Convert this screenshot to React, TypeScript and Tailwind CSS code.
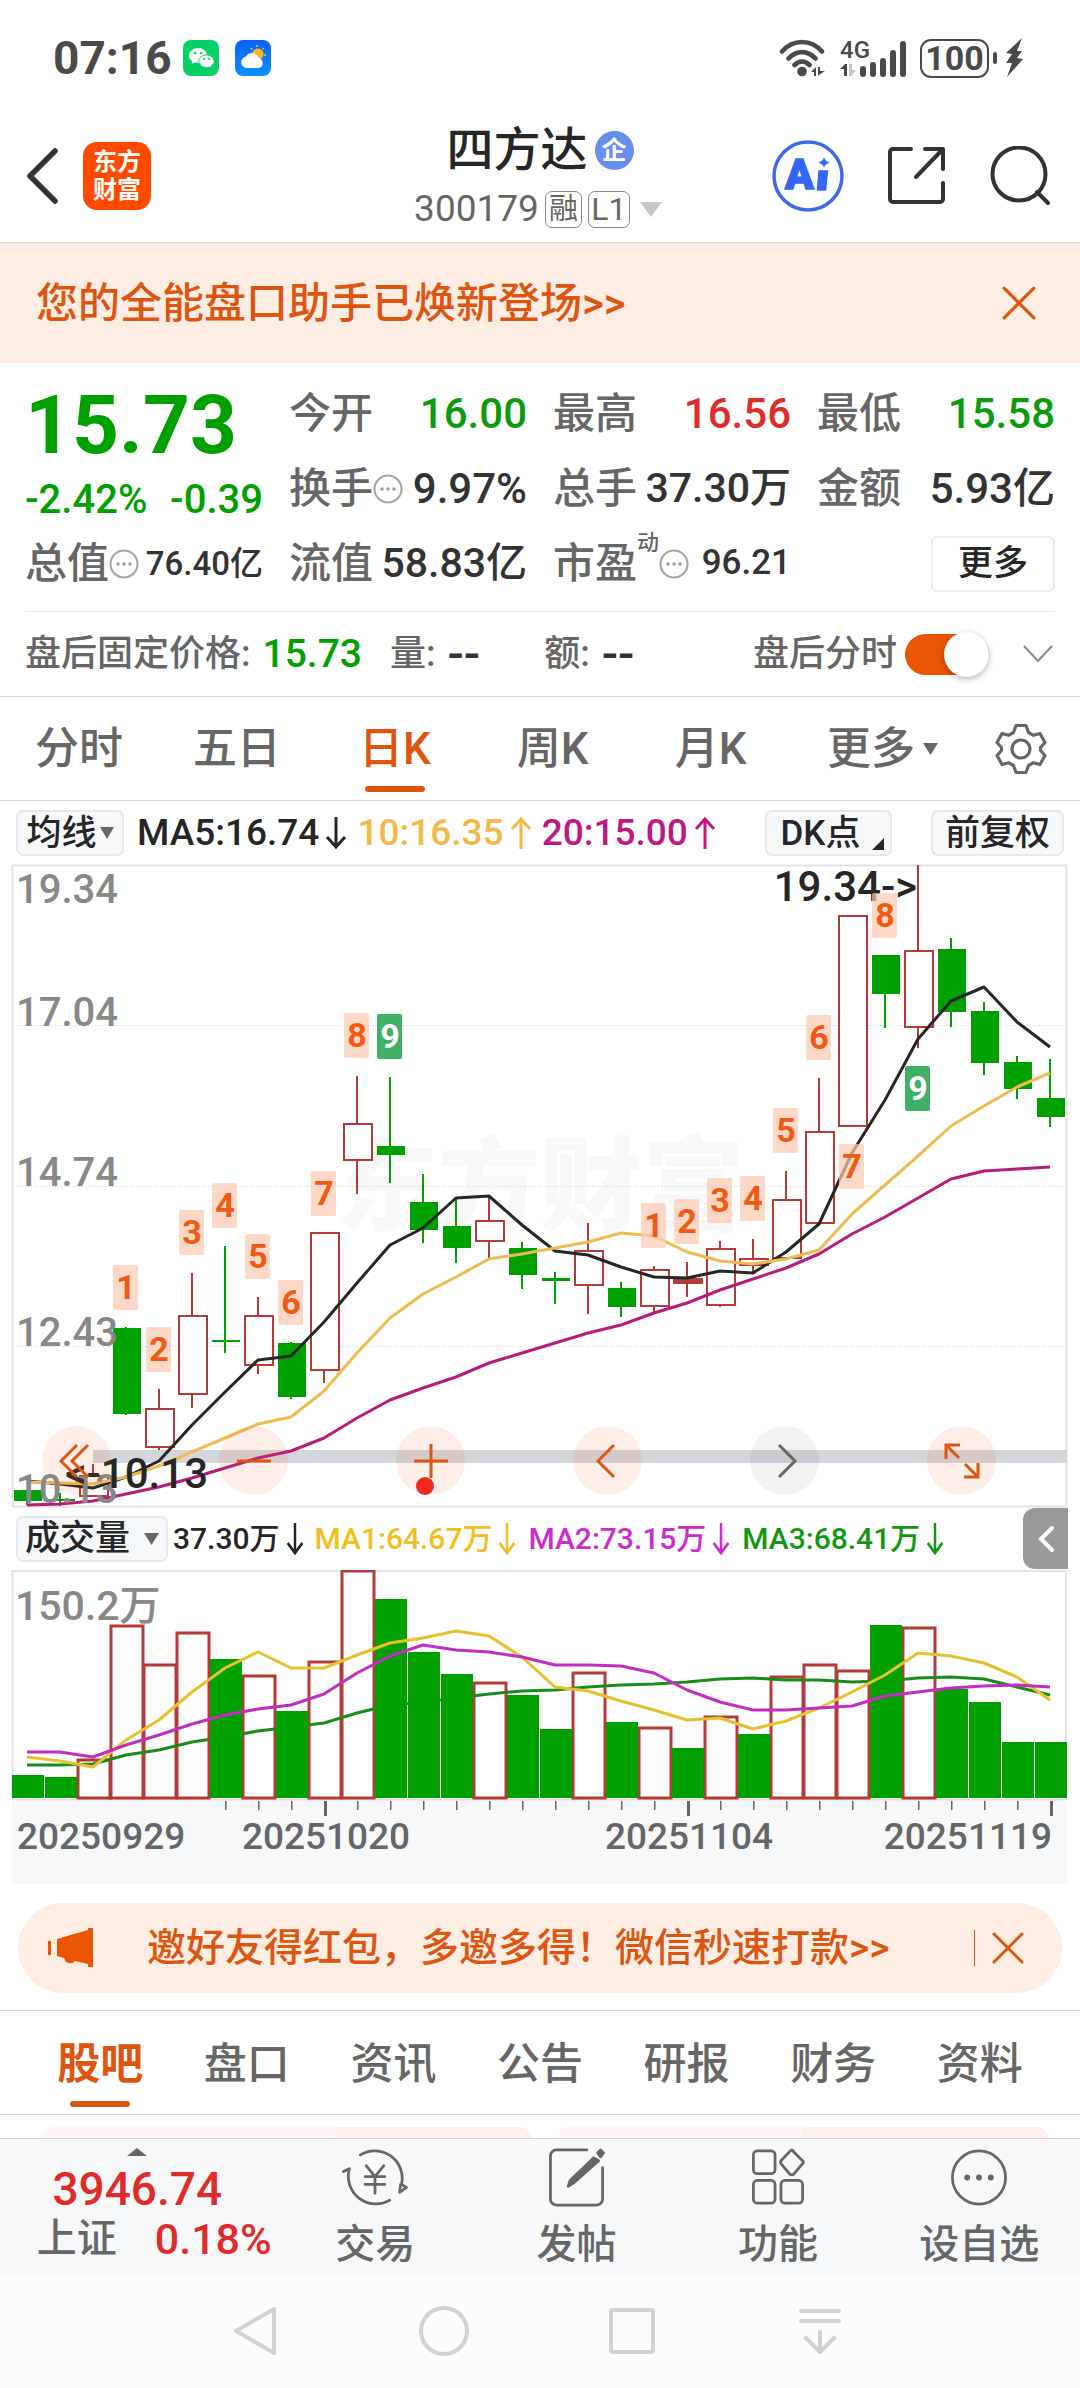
import React, { useState } from 'react';

type Candle = { up: boolean; high: number; top: number; bottom: number; low: number; solid?: boolean };

const STEP = 33;
const cx = (i: number) => 27 + STEP * i;

const c = (kind: string, high: number, top: number, bottom: number, low: number): Candle => ({
  up: kind !== 'g',
  solid: kind === 's',
  high,
  top,
  bottom,
  low,
});

const candles: Candle[] = [
  c('g', 625, 625, 636, 640),
  c('g', 628, 634, 636, 641),
  c('r', 599, 611, 631, 632),
  c('g', 462, 463, 549, 550),
  c('r', 524, 544, 582, 585),
  c('r', 408, 451, 529, 543),
  c('g', 381, 475, 477, 488),
  c('r', 432, 451, 500, 509),
  c('g', 477, 478, 532, 534),
  c('r', 368, 368, 505, 518),
  c('r', 211, 259, 295, 329),
  c('g', 212, 281, 290, 318),
  c('g', 309, 337, 365, 378),
  c('g', 334, 361, 383, 398),
  c('r', 331, 356, 376, 393),
  c('g', 377, 383, 410, 424),
  c('g', 407, 413, 416, 439),
  c('r', 358, 386, 420, 449),
  c('g', 417, 423, 442, 452),
  c('r', 401, 405, 441, 448),
  c('s', 397, 414, 418, 432),
  c('r', 376, 384, 440, 442),
  c('r', 374, 394, 400, 408),
  c('r', 306, 335, 393, 393),
  c('r', 213, 267, 358, 360),
  c('r', 51, 51, 261, 261),
  c('g', 90, 90, 129, 163),
  c('r', 0, 86, 162, 183),
  c('g', 73, 84, 147, 162),
  c('g', 137, 146, 198, 210),
  c('g', 191, 197, 224, 234),
  c('g', 194, 233, 252, 262),
];

const ma5 = [616, 619, 623, 612, 596, 560, 527, 495, 491, 457, 418, 380, 363, 333, 331, 360, 386, 390, 402, 412, 413, 406, 408, 387, 359, 288, 235, 174, 136, 122, 157, 182];
const ma10 = [617, 618, 619, 612, 601, 587, 573, 559, 552, 526, 488, 453, 429, 412, 394, 389, 383, 377, 368, 371, 387, 396, 399, 394, 385, 349, 320, 291, 261, 241, 222, 208];
const ma20 = [640, 639, 636, 629, 622, 613, 603, 593, 586, 573, 553, 535, 523, 512, 498, 488, 478, 468, 460, 448, 438, 425, 414, 403, 389, 369, 352, 333, 314, 306, 304, 302];

const badges: [number, string, number, boolean?][] = [
  [3, '1', 400], [4, '2', 462], [5, '3', 345], [6, '4', 318], [7, '5', 369], [8, '6', 415], [9, '7', 306],
  [10, '8', 148], [11, '9', 149, true], [19, '1', 338], [20, '2', 334], [21, '3', 313], [22, '4', 311],
  [23, '5', 243], [24, '6', 150], [25, '7', 279], [26, '8', 28], [27, '9', 201, true],
];

const volumes: [boolean, number][] = [
  [false, 205], [false, 207], [true, 190], [true, 56], [true, 95], [true, 63], [false, 89], [true, 106],
  [false, 141], [true, 92], [true, 1], [false, 29], [false, 82], [false, 104], [true, 113], [false, 125],
  [false, 159], [true, 103], [false, 152], [true, 158], [false, 178], [true, 147], [false, 164], [true, 107],
  [true, 95], [true, 101], [false, 55], [true, 58], [false, 119], [false, 132], [false, 172], [false, 172],
];
const v1 = [187, 191, 197, 170, 150, 122, 98, 82, 98, 98, 85, 73, 68, 61, 66, 87, 117, 121, 131, 140, 150, 148, 159, 151, 138, 122, 105, 83, 86, 93, 107, 130];
const v2 = [182, 182, 187, 175, 165, 154, 145, 139, 135, 124, 103, 86, 75, 80, 82, 87, 95, 95, 96, 103, 120, 132, 140, 140, 138, 136, 126, 122, 118, 116, 115, 117];
const v3 = [195, 195, 194, 185, 180, 172, 167, 161, 157, 153, 143, 135, 132, 128, 124, 121, 120, 117, 115, 114, 112, 109, 108, 110, 110, 112, 111, 108, 107, 109, 117, 125];

const points = (ys: number[]) => ys.map((y, i) => `${cx(i)},${y}`).join(' ');

function Line({ ys, color }: { ys: number[]; color: string }) {
  return <polyline points={points(ys)} fill="none" stroke={color} strokeWidth="3" strokeLinejoin="round" />;
}

function PriceChart() {
  return (
    <svg viewBox="0 0 1080 642" className="block w-full overflow-visible" role="img" aria-label="日K线图">
      <text x="336" y="358" fontSize="102" fontWeight="900" fill="#f8f8f8">东方财富</text>
      <rect x="12.5" y="0.5" width="1054" height="641" fill="none" stroke="#e2e3e5" strokeWidth="2" />
      {[160, 321, 481].map((y) => (
        <line key={y} x1="13" x2="1067" y1={y + 0.5} y2={y + 0.5} stroke="#d0d0d0" strokeDasharray="1 2" />
      ))}
      {candles.map((k, i) => {
        const x = cx(i);
        return k.up ? (
          <g key={i} stroke="#b53b37" strokeWidth="2" fill={k.solid ? '#b53b37' : '#fff'}>
            <path d={`M${x} ${k.high}V${k.top}M${x} ${k.bottom}V${k.low}`} />
            <rect x={x - 13} y={k.top} width="28" height={k.bottom - k.top} />
          </g>
        ) : (
          <g key={i} fill="#00a000">
            <rect x={x - 1} y={k.high} width="2" height={k.low - k.high} />
            <rect x={x - 13} y={k.top} width="28" height={k.bottom - k.top} />
          </g>
        );
      })}
      <rect x="93" y="585" width="974" height="13" fill="#d3d7dc" />
      <Line ys={ma5} color="#262626" />
      <Line ys={ma10} color="#efbb55" />
      <Line ys={ma20} color="#b71c78" />
      <g fontSize="40" fontWeight="500">
        <g fill="#888">
          <text x="16" y="38">19.34</text>
          <text x="16" y="161">17.04</text>
          <text x="16" y="321">14.74</text>
          <text x="16" y="481">12.43</text>
          <text x="16" y="638">10.13</text>
        </g>
        <text x="917" y="36" fontSize="42" fill="#262626" textAnchor="end">19.34-&gt;</text>
        <text x="208" y="623" fontSize="42" fill="#262626" textAnchor="end">&lt;-10.13</text>
      </g>
      {badges.map(([i, label, top, green]) => (
        <g key={i}>
          <rect x={cx(i) - 13} y={top} width="25" height="45" rx="2" fill={green ? '#3fb065' : '#ffc9b0'} fillOpacity={green ? 1 : 0.7} />
          <text x={cx(i)} y={top + 34} fontSize="34" fontWeight="700" textAnchor="middle" fill={green ? '#fff' : '#f05a12'}>{label}</text>
        </g>
      ))}
    </svg>
  );
}

function VolumeChart() {
  return (
    <svg viewBox="0 0 1080 315" className="block w-full" role="img" aria-label="成交量图">
      <rect x="12" y="230" width="1055" height="85" fill="#f7f8fa" />
      <path d="M12.5 229V1H1066V229" fill="none" stroke="#e2e3e5" strokeWidth="2" />
      <path d="M12 229.500H1067" stroke="#e2e3e5" strokeWidth="2" />
      <text x="15" y="50" fontSize="41" fontWeight="500" fill="#888">150.2万</text>
      <g>
        {volumes.map(([up, top], i) =>
          up ? (
            <rect key={i} x={12 + STEP * i} y={top} width="32" height={228 - top} fill="#fff" stroke="#b53b37" strokeWidth="3" />
          ) : null,
        )}
      </g>
      <Line ys={v3} color="#1b8c1b" />
      {volumes.map(([up, top], i) =>
        up ? null : <rect key={i} x={12 + STEP * i} y={top} width="32" height={228 - top} fill="#00a000" />,
      )}
      <Line ys={v1} color="#e8c12e" />
      <Line ys={v2} color="#c12fc1" />
      {volumes.map((_, i) =>
        i < 6 ? null : (
          <rect key={i} x={cx(i)} y="231" width={i % 11 === 9 ? 3 : 1.500} height={i % 11 === 9 ? 15 : 9} fill="#666" />
        ),
      )}
      <g fontSize="37" fontWeight="500" fill="#666">
        <text x="17" y="279">20250929</text>
        <text x="326" y="279" textAnchor="middle">20251020</text>
        <text x="689" y="279" textAnchor="middle">20251104</text>
        <text x="1052" y="279" textAnchor="end">20251119</text>
      </g>
    </svg>
  );
}

function Tri({ className, up }: { className: string; up?: boolean }) {
  return (
    <svg viewBox="0 0 16 12" preserveAspectRatio="none" className={className} fill="currentColor" aria-hidden="true">
      <path d={up ? 'M0 12H16L8 0Z' : 'M0 0H16L8 12Z'} />
    </svg>
  );
}

function Arrow({ up, slim }: { up?: boolean; slim?: boolean }) {
  return (
    <svg viewBox="0 0 22 34" className={slim ? 'h-[34px] w-[18px]' : 'h-[34px] w-[22px]'} preserveAspectRatio="none" fill="none" stroke="currentColor" strokeWidth="3" aria-label={up ? '上升' : '下降'}>
      <path d={up ? 'M11 33V3M2 13L11 3L20 13' : 'M11 1V31M2 21L11 31L20 21'} />
    </svg>
  );
}

function Cross({ className }: { className: string }) {
  return (
    <svg viewBox="0 0 32 32" className={className} fill="none" stroke="currentColor" strokeWidth="3" strokeLinecap="round">
      <path d="M2 2L30 30M30 2L2 30" />
    </svg>
  );
}

function Dots() {
  return (
    <svg viewBox="0 0 30 30" className="size-[30px] shrink-0" aria-label="说明" fill="#999">
      <circle cx="15" cy="15" r="13.500" fill="none" stroke="#a3a3a3" strokeWidth="2" />
      <circle cx="9" cy="15" r="1.700" />
      <circle cx="15" cy="15" r="1.700" />
      <circle cx="21" cy="15" r="1.700" />
    </svg>
  );
}

function Stat({ label, value, info, tone = 'text-[#333]', size = 'text-[42px]' }: { label: string; value: string; info?: boolean; tone?: string; size?: string }) {
  return (
    <div className="flex h-[75px] items-center whitespace-nowrap">
      <span className="text-[42px] text-[#666]">{label}</span>
      {info && <Dots />}
      <span className={`ml-auto ${size} ${tone}`}>{value}</span>
    </div>
  );
}

function StatusBar() {
  return (
    <div className="flex h-[100px] items-center pt-[16px] pr-[57px] pl-[53px] text-[#4a4a4a]">
      <span className="text-[46px] font-bold">07:16</span>
      <svg viewBox="0 0 36 36" className="ml-[11px] size-[36px]" aria-label="微信">
        <rect width="36" height="36" rx="8" fill="#07d066" />
        <path d="M15 8c-5 0-9 3.300-9 7.500 0 2.400 1.300 4.400 3.300 5.800L8.500 24l3.200-1.600c1 .3 2.100.4 3.300.4 5 0 9-3.200 9-7.300S20 8 15 8Z" fill="#fff" />
        <path d="M23.500 15c-4.300 0-7.700 2.700-7.700 6.200s3.400 6.200 7.700 6.200c.9 0 1.800-.1 2.600-.4l2.700 1.500-.7-2.500c1.900-1.200 3-2.900 3-4.800 0-3.500-3.300-6.200-7.600-6.200Z" fill="#fff" stroke="#07d066" />
        <g fill="#07d066"><circle cx="12" cy="13" r="1.300" /><circle cx="18" cy="13" r="1.300" /><circle cx="21" cy="19" r="1.100" /><circle cx="26" cy="19" r="1.100" /></g>
      </svg>
      <svg viewBox="0 0 36 36" className="ml-[16px] size-[36px]" aria-label="天气">
        <defs>
          <linearGradient id="sky" x2="0" y2="1"><stop stopColor="#0a62f5" /><stop offset="1" stopColor="#0a93ff" /></linearGradient>
        </defs>
        <rect width="36" height="36" rx="8" fill="url(#sky)" />
        <circle cx="23" cy="14" r="5.500" fill="#ffb81f" />
        <path d="M22 5v2M29 8l-1.500 1.500M31 15h-2M16 8l1 1.500" stroke="#ffc83d" strokeWidth="1.400" />
        <path d="M12 28a5.800 5.800 0 0 1-1-11.500 7 7 0 0 1 12.800 1.800A5 5 0 0 1 24 28Z" fill="#fff" />
      </svg>
      <svg viewBox="0 0 48 38" className="ml-auto h-[38px] w-[48px]" aria-label="无线网络" fill="none" stroke="currentColor" strokeWidth="4.600" strokeLinecap="round">
        <path d="M3 12.500C14-.2 32-.2 43 12.500M9.500 19.500c8-8.500 19-8.500 27 0M15.500 26c4.500-4.500 10.500-4.500 15 0" />
        <circle cx="23" cy="32.500" r="4.800" fill="currentColor" stroke="none" />
        <path d="M32 33l5-5v9h-2v-4ZM39 28v9l1.500-1.500L46 32h-5v-4Z" fill="currentColor" stroke="none" />
      </svg>
      <svg viewBox="0 0 68 38" className="ml-[13px] h-[38px] w-[68px] overflow-visible" aria-label="4G 信号" fill="currentColor">
        <text x="0" y="19" fontSize="24" fontWeight="500">4G</text>
        <path d="M0 30l5-5h2v12H4v-7Z" />
        <path d="M9 25h3v6h4l-5 6H9Z" fill="#c4c4c4" />
        <rect x="20" y="27" width="6" height="11" rx="3" />
        <rect x="30" y="23" width="6" height="15" rx="3" />
        <rect x="40" y="19" width="6" height="19" rx="3" />
        <rect x="50" y="11" width="6" height="27" rx="3" />
        <rect x="60" y="2" width="6" height="36" rx="3" />
      </svg>
      <span className="ml-[12px] flex h-[39px] w-[69px] items-center justify-center rounded-[11px] border-[2px] border-[#4a4a4a] text-[34px] leading-none font-bold">100</span>
      <span className="ml-[4px] h-[12px] w-[4px] rounded-full bg-[#4a4a4a]" />
      <svg viewBox="0 0 18 40" className="ml-[8px] h-[40px] w-[18px]" fill="currentColor" aria-label="充电中">
        <path d="M17 0L1 15l6 1-6 9h6L2 39 18 21l-6-1 5-7h-5Z" />
      </svg>
    </div>
  );
}

function Header() {
  return (
    <header className="flex h-[143px] items-center border-b border-[#d6d6d6] pt-[10px] pr-[30px] pl-[26px]">
      <div className="flex flex-1 items-center">
        <button type="button" aria-label="返回">
          <svg viewBox="0 0 32 56" className="h-[56px] w-[32px]" fill="none" stroke="#333" strokeWidth="5.500" strokeLinecap="round" strokeLinejoin="round">
            <path d="M29 3L4 28L29 53" />
          </svg>
        </button>
        <button type="button" className="ml-[25px] grid size-[68px] content-center rounded-[14px] bg-[#ff4a00] text-[24px] leading-[28px] font-bold text-white">
          <span>东方</span>
          <span>财富</span>
        </button>
      </div>
      <div className="flex flex-col items-center pt-[8px]">
        <h1 className="flex h-[58px] items-center gap-[7px] pl-[4px] text-[47px] font-medium text-[#262626]">
          四方达
          <span className="flex size-[39px] items-center justify-center rounded-full bg-[#658fe8] text-[25px] leading-none font-bold text-white">企</span>
        </h1>
        <button type="button" className="flex h-[60px] items-center text-[37px] text-[#666]">
          300179
          <span className="ml-[6px] flex h-[37px] w-[37px] items-center justify-center rounded-[7px] border border-[#888] text-[29px] leading-none">融</span>
          <span className="ml-[6px] flex h-[37px] w-[42px] items-center justify-center rounded-[7px] border border-[#888] text-[32px] leading-none">L1</span>
          <Tri className="ml-[10px] h-[15px] w-[22px] text-[#c8c8c8]" />
        </button>
      </div>
      <div className="flex flex-1 items-center justify-end">
        <button type="button" aria-label="Ai">
          <svg viewBox="0 0 72 72" className="size-[72px]" fill="#3466f6">
            <circle cx="36" cy="36" r="34" fill="none" stroke="#3d6be8" strokeWidth="3.500" />
            <text x="13" y="49" fontSize="42" fontWeight="900" stroke="#3466f6" strokeWidth="1.500">A</text>
            <path d="M47 31h8.500l-2 19H45.500Z" stroke="#3466f6" strokeWidth="1.500" strokeLinejoin="round" />
            <path d="M52 17q1 4.500 6 5.500-5 1-6 5.500-1-4.500-6-5.500 5-1 6-5.500Z" />
          </svg>
        </button>
        <button type="button" aria-label="分享" className="ml-[43px]">
          <svg viewBox="0 0 60 60" className="size-[60px]" fill="none" stroke="#333" strokeWidth="4" strokeLinecap="round" strokeLinejoin="round">
            <path d="M24 3H6a3 3 0 0 0-3 3V53a3 3 0 0 0 3 3H53a3 3 0 0 0 3-3V37M38 3H56V23M55 4L29 31" />
          </svg>
        </button>
        <button type="button" aria-label="搜索" className="ml-[43px]">
          <svg viewBox="0 0 60 60" className="size-[60px]" fill="none" stroke="#333" strokeWidth="4" strokeLinecap="round">
            <circle cx="29" cy="28" r="26.500" />
            <path d="M47 46L58 57" />
          </svg>
        </button>
      </div>
    </header>
  );
}

function Quote() {
  const [after, setAfter] = useState(true);
  return (
    <section className="border-b border-[#d6d6d6] px-[25px] pt-[13px] font-medium">
      <div className="grid grid-cols-4 gap-x-[26px] border-b border-[#ececec] pb-[10px]">
        <div className="row-span-2 text-[#00a000]">
          <div className="h-[98px] text-[82px] leading-[98px] font-bold">15.73</div>
          <div className="flex h-[52px] items-center justify-between text-[40px] whitespace-nowrap">
            <span>-2.42%</span>
            <span>-0.39</span>
          </div>
        </div>
        <Stat label="今开" value="16.00" tone="text-[#0d9b0d]" />
        <Stat label="最高" value="16.56" tone="text-[#e02b2b]" />
        <Stat label="最低" value="15.58" tone="text-[#0d9b0d]" />
        <Stat label="换手" value="9.97%" info />
        <Stat label="总手" value="37.30万" size="text-[41px]" />
        <Stat label="金额" value="5.93亿" />
        <Stat label="总值" value="76.40亿" info size="text-[33px]" />
        <Stat label="流值" value="58.83亿" size="text-[41px]" />
        <div className="flex h-[75px] items-center whitespace-nowrap">
          <span className="text-[42px] text-[#666]">市盈</span>
          <sup className="top-0 self-start text-[22px] leading-[34px] text-[#666]">动</sup>
          <Dots />
          <span className="ml-auto text-[35px] text-[#333]">96.21</span>
        </div>
        <div className="flex h-[75px] items-center justify-end">
          <button type="button" className="h-[56px] w-[124px] rounded-[6px] border-[2px] border-[#ececec] text-[35px] leading-none text-[#262626]">更多</button>
        </div>
      </div>
      <div className="flex h-[84px] items-center text-[36px] whitespace-nowrap text-[#666]">
        <span>盘后固定价格:</span>
        <span className="ml-[12px] text-[39px] text-[#00a000]">15.73</span>
        <span className="ml-[28px]">量:</span>
        <span className="ml-[12px] text-[48px] leading-none text-[#333]">--</span>
        <span className="ml-[64px]">额:</span>
        <span className="ml-[12px] text-[48px] leading-none text-[#333]">--</span>
        <label htmlFor="after-hours" className="ml-auto">盘后分时</label>
        <input
          id="after-hours"
          type="checkbox"
          role="switch"
          checked={after}
          onChange={(e) => setAfter(e.target.checked)}
          className="ml-[8px] flex h-[41px] w-[84px] appearance-none items-center rounded-full bg-[#ccc] before:size-[45px] before:rounded-full before:bg-white before:shadow-[0_2px_6px_rgba(0,0,0,0.3)] checked:justify-end checked:bg-[#ea5504]"
        />
        <button type="button" aria-label="展开" className="mr-[2px] ml-[34px]">
          <svg viewBox="0 0 30 18" className="h-[18px] w-[30px]" fill="none" stroke="#888" strokeWidth="2"><path d="M1 1L15 16L29 1" /></svg>
        </button>
      </div>
    </section>
  );
}

const periods = ['分时', '五日', '日K', '周K', '月K'];

function PeriodTabs() {
  return (
    <nav className="flex h-[104px] border-b border-[#d6d6d6] text-[44px] font-medium text-[#666]">
      {periods.map((p) => (
        <button key={p} type="button" className={p === '日K' ? 'relative flex-[4] text-[#dd5611]' : 'relative flex-[4]'}>
          {p}
          {p === '日K' && <span className="absolute inset-x-0 bottom-[8px] mx-auto h-[6px] w-[60px] rounded-full bg-[#dd5611]" />}
        </button>
      ))}
      <button type="button" className="flex flex-[4] items-center justify-center gap-[8px] pl-[14px]">
        更多
        <Tri className="h-[12px] w-[15px]" />
      </button>
      <button type="button" aria-label="设置" className="flex flex-[3] items-center justify-center">
        <svg viewBox="0 0 52 52" className="size-[52px]" fill="none" stroke="#666" strokeWidth="3.200" strokeLinejoin="round">
          <path d="M21 2.500H31L33.500 9.500L38.500 12.300L45 10.500L50 19.500L45.500 24.500V27.500L50 32.500L45 41.500L38.500 39.700L33.500 42.500L31 49.500H21L18.500 42.500L13.500 39.700L7 41.500L2 32.500L6.500 27.500V24.500L2 19.500L7 10.500L13.500 12.300L18.500 9.500Z" />
          <circle cx="26" cy="26" r="9" />
        </svg>
      </button>
    </nav>
  );
}

const chip = 'flex h-[46px] items-center justify-center rounded-[7px] border-[2px] border-[#e6e8eb] bg-[#f7f8fa] text-[35px] leading-none text-[#262626]';

function Indicators() {
  return (
    <div className="flex h-[64px] items-center pr-[16px] pl-[16px] text-[37px] font-medium whitespace-nowrap">
      <button type="button" className={`${chip} w-[108px]`}>
        均线
        <Tri className="ml-[3px] h-[12px] w-[14px] text-[#666]" />
      </button>
      <span className="ml-[13px] flex items-center gap-[6px] text-[#262626]">MA5:16.74<Arrow /></span>
      <span className="ml-[10px] flex items-center gap-[6px] text-[#f3b94c]">10:16.35<Arrow up /></span>
      <span className="ml-[10px] flex items-center gap-[6px] text-[#c01880]">20:15.00<Arrow up /></span>
      <button type="button" className={`${chip} relative ml-auto w-[127px] pr-[16px]`}>
        DK点
        <svg viewBox="0 0 12 12" className="absolute right-[6px] bottom-[4px] size-[12px]" fill="#262626"><path d="M12 0V12H0Z" /></svg>
      </button>
      <button type="button" className={`${chip} ml-[39px] w-[133px]`}>前复权</button>
    </div>
  );
}

const round = 'relative flex size-[69px] items-center justify-center rounded-full';

function Controls() {
  const icon = 'size-[36px]';
  const p = { viewBox: '0 0 36 36', fill: 'none', stroke: 'currentColor', strokeWidth: 3 };
  return (
    <div className="absolute inset-x-0 bottom-[12px] flex justify-between pr-[84px] pl-[42px] text-[#dd5611]">
      <button type="button" aria-label="最早" className={`${round} bg-[#f05a14]/10`}>
        <svg {...p} className={icon}><path d="M18 2L2 18L18 34M29 2L13 18L29 34" /></svg>
      </button>
      <button type="button" aria-label="缩小" className={`${round} bg-[#f05a14]/10`}>
        <svg {...p} className={icon}><path d="M1 18H35" /></svg>
      </button>
      <button type="button" aria-label="放大" className={`${round} bg-[#f05a14]/10`}>
        <svg {...p} className={icon}><path d="M1 18H35M18 1V35" /></svg>
        <span className="absolute bottom-0 left-[20px] size-[18px] rounded-full bg-[#f22822]" />
      </button>
      <button type="button" aria-label="向前" className={`${round} bg-[#f05a14]/10`}>
        <svg {...p} className={icon}><path d="M24 2L8 18L24 34" /></svg>
      </button>
      <button type="button" aria-label="向后" className={`${round} bg-black/5 text-[#666]`}>
        <svg {...p} className={icon}><path d="M12 2L28 18L12 34" /></svg>
      </button>
      <button type="button" aria-label="全屏" className={`${round} bg-[#f05a14]/10`}>
        <svg {...p} className={icon}><path d="M2 16V2H16M2 2L15 15M34 20V34H20M34 34L21 21" /></svg>
      </button>
    </div>
  );
}

function VolumeHeader() {
  return (
    <div className="flex h-[63px] items-center pr-[12px] pl-[16px] text-[30px] font-medium whitespace-nowrap">
      <button type="button" className={`${chip} w-[152px]`}>
        成交量
        <Tri className="ml-[14px] h-[12px] w-[15px] text-[#666]" />
      </button>
      <span className="ml-[5px] flex items-center gap-[6px] text-[#262626]">37.30万<Arrow slim /></span>
      <span className="ml-[11px] flex items-center gap-[6px] text-[#f0c01e]">MA1:64.67万<Arrow slim /></span>
      <span className="ml-[12px] flex items-center gap-[6px] text-[#cc2ccc]">MA2:73.15万<Arrow slim /></span>
      <span className="ml-[12px] flex items-center gap-[6px] text-[#149614]">MA3:68.41万<Arrow slim /></span>
      <button type="button" aria-label="收起" className="ml-auto flex h-[61px] w-[45px] items-center justify-center rounded-l-[12px] bg-[#999]">
        <svg viewBox="0 0 18 28" className="h-[28px] w-[18px]" fill="none" stroke="#fff" strokeWidth="4" strokeLinecap="round"><path d="M15 3L4 14L15 25" /></svg>
      </button>
    </div>
  );
}

function Promo() {
  return (
    <div className="mx-[18px] mt-[18px] mb-[17px] flex h-[90px] items-center rounded-full bg-[#fdede3] pr-[38px] pl-[30px] text-[39px] font-medium whitespace-nowrap text-[#dd5611]">
      <svg viewBox="0 0 46 40" className="h-[40px] w-[46px] shrink-0" fill="#ea5504" aria-hidden="true">
        <path d="M0 13h3v14H0ZM9 11L40 2V0h5V39H40V36L27 33Q24 37 18 34L16 30L9 28Z" />
      </svg>
      <a href="#invite" className="ml-[53px]">邀好友得红包，多邀多得！微信秒速打款&gt;&gt;</a>
      <span className="ml-auto h-[36px] w-px bg-[#dd5611]" />
      <button type="button" aria-label="关闭" className="ml-[17px]"><Cross className="size-[32px]" /></button>
    </div>
  );
}

const sections = ['股吧', '盘口', '资讯', '公告', '研报', '财务', '资料'];

function SectionTabs() {
  return (
    <nav className="grid h-[105px] grid-cols-7 border-y border-[#d6d6d6] px-[27px] text-[43px] font-medium text-[#666]">
      {sections.map((s, i) => (
        <button key={s} type="button" className={i === 0 ? 'relative pt-[4px] font-bold text-[#dd5611]' : 'relative pt-[4px]'}>
          {s}
          {i === 0 && <span className="absolute inset-x-0 bottom-[7px] mx-auto h-[6px] w-[60px] rounded-full bg-[#dd5611]" />}
        </button>
      ))}
    </nav>
  );
}

function BottomItem({ label, children }: { label: string; children: React.ReactNode }) {
  return (
    <button type="button" className="flex flex-[201] flex-col items-center pt-[8px]">
      <svg viewBox="0 0 66 62" className="h-[62px] w-[66px]" fill="none" stroke="#666" strokeWidth="2.800" strokeLinecap="round" strokeLinejoin="round">{children}</svg>
      <span className="mt-[8px] text-[40px] leading-[58px]">{label}</span>
    </button>
  );
}

function BottomBar() {
  return (
    <footer className="flex h-[136px] border-t border-[#d0d2d4] bg-[#f7f8fa] font-medium whitespace-nowrap text-[#666]">
      <button type="button" className="flex flex-[274] flex-col items-center pt-[9px]">
        <Tri up className="h-[8px] w-[20px]" />
        <span className="mt-[8px] text-[46px] leading-[50px] text-[#e02b2b]">3946.74</span>
        <span className="ml-[34px] flex items-center gap-[38px] text-[40px] leading-[50px]">
          上证
          <span className="text-[43px] text-[#e02b2b]">0.18%</span>
        </span>
      </button>
      <BottomItem label="交易">
        <path d="M18 8A28 28 0 0 1 60 38M48 54A28 28 0 0 1 7 22M7 22L1 25M60 38L65 41L58 46L59 38" />
        <path d="M24 19L33 30L42 19M33 30V47M23 30H43M23 38H43" />
      </BottomItem>
      <BottomItem label="发帖">
        <path d="M43 3H12a6 6 0 0 0-6 6V53a6 6 0 0 0 6 6H53a6 6 0 0 0 6-6V21" />
        <path d="M50 11L55 14L29 37L24 40L26 34ZM54 6L57 3L60 6L57 10Z" fill="#666" />
      </BottomItem>
      <BottomItem label="功能">
        <rect x="8" y="4" width="22" height="23" rx="4" />
        <path d="M47 3L58 14Q59.500 15.500 58 17L49 27.500Q47 29 45 27.500L36 17Q35 15.500 36 14L45 4.500Q47 2 49 4.500Z" />
        <rect x="8" y="34" width="22" height="23" rx="4" />
        <rect x="36" y="34" width="22" height="23" rx="4" />
      </BottomItem>
      <BottomItem label="设自选">
        <circle cx="33" cy="31" r="27" />
        <g fill="#666" stroke="none"><circle cx="21" cy="31" r="3" /><circle cx="33" cy="31" r="3" /><circle cx="45" cy="31" r="3" /></g>
      </BottomItem>
    </footer>
  );
}

function SystemNav() {
  const p = { viewBox: '0 0 50 50', className: 'size-[50px]', fill: 'none', stroke: '#d2d2d2', strokeWidth: 4, strokeLinejoin: 'round' as const, strokeLinecap: 'round' as const };
  return (
    <div className="flex h-[114px] items-center justify-between bg-[#fcfcfc] pr-[235px] pl-[231px]">
      <button type="button" aria-label="系统返回"><svg {...p}><path d="M43 3V47L5 25Z" /></svg></button>
      <button type="button" aria-label="主页"><svg {...p}><circle cx="25" cy="25" r="23" /></svg></button>
      <button type="button" aria-label="最近任务"><svg {...p}><rect x="4" y="4" width="42" height="42" rx="2" /></svg></button>
      <button type="button" aria-label="通知栏"><svg {...p}><path d="M6 5H44M6 15H44M25 26V45M11 32L25 46L39 32" /></svg></button>
    </div>
  );
}

export default function App() {
  return (
    <div className="w-full bg-white font-['Roboto','Noto_Sans_CJK_SC',sans-serif]">
      <StatusBar />
      <Header />
      <div className="flex h-[120px] items-center justify-between bg-[#fdede3] pr-[44px] pl-[36px] text-[42px] font-medium whitespace-nowrap text-[#dd5611]">
        <a href="#assistant">您的全能盘口助手已焕新登场&gt;&gt;</a>
        <button type="button" aria-label="关闭提示"><Cross className="size-[34px]" /></button>
      </div>
      <Quote />
      <PeriodTabs />
      <Indicators />
      <div className="relative">
        <PriceChart />
        <Controls />
      </div>
      <VolumeHeader />
      <VolumeChart />
      <Promo />
      <SectionTabs />
      <div className="grid grid-cols-2 gap-[27px] pt-[12px] pr-[32px] pl-[41px]">
        <div className="h-[11px] rounded-t-[22px] bg-linear-to-r from-[#fef6f4] from-60% to-[#fdf0ee] to-60%" />
        <div className="h-[11px] rounded-t-[22px] bg-linear-to-r from-[#fef6f4] from-50% to-[#fdefed] to-50%" />
      </div>
      <BottomBar />
      <SystemNav />
    </div>
  );
}
